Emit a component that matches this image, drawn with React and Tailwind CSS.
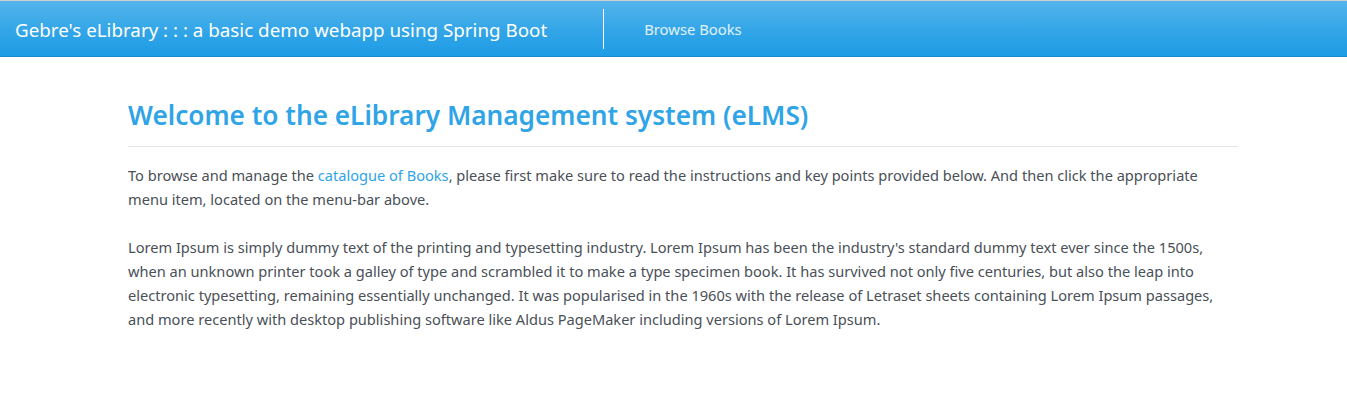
import React from "react";

const App = () => {
  return (
    <div className="min-h-[407px] bg-white font-['Noto_Sans',sans-serif] text-[#495057]">
      {/* Navbar */}
      <nav className="border-t border-[#d0d0d0] border-b border-b-[#178acc] h-[57px] bg-[linear-gradient(#54b4eb,#2fa4e7_60%,#1d9ce5)] flex items-center">
        <div className="pl-[15px] pr-[56px] pt-[3px] text-[18.8px] text-white leading-none whitespace-nowrap">
          Gebre's eLibrary : : : a basic demo webapp using Spring Boot
        </div>
        <div className="h-[40px] w-px bg-white"></div>
        <a className="pl-[40px] pt-[2px] text-[14.8px] text-white/85 leading-none">Browse Books</a>
      </nav>

      {/* Content */}
      <main className="pl-[128px] pt-[40px]">
        <div className="w-[1110px]">
          <h1 className="text-[26.2px] font-semibold text-[#2fa4e7] leading-[36px]">
            Welcome to the eLibrary Management system (eLMS)
          </h1>
          <hr className="mt-[13px] mb-[16px] border-t border-[#e5e5e5]" />
          <p className="text-[14.6px] leading-[24px]">
            To browse and manage the{" "}
            <a className="text-[#2fa4e7]">catalogue of Books</a>, please first
            make sure to read the instructions and key points provided below.
            And then click the appropriate menu item, located on the menu-bar
            above.
          </p>
          <p className="mt-[24px] text-[14.6px] leading-[24px]">
            Lorem Ipsum is simply dummy text of the printing and typesetting
            industry. Lorem Ipsum has been the industry's standard dummy text
            ever since the 1500s, when an unknown printer took a galley of type
            and scrambled it to make a type specimen book. It has survived not
            only five centuries, but also the leap into electronic typesetting,
            remaining essentially unchanged. It was popularised in the 1960s
            with the release of Letraset sheets containing Lorem Ipsum passages,
            and more recently with desktop publishing software like Aldus
            PageMaker including versions of Lorem Ipsum.
          </p>
        </div>
      </main>
    </div>
  );
};

export default App;
